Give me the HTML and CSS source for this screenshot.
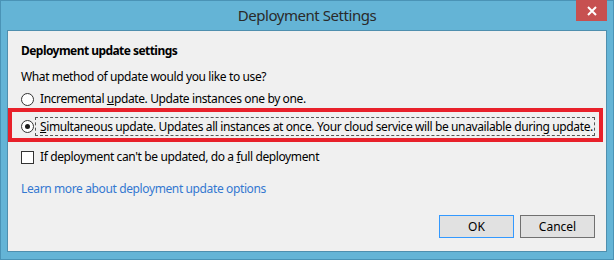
FILE: index.html
```html
<!DOCTYPE html>
<html lang="en">
<head>
    <meta charset="utf-8" />
    <title>Deployment Settings</title>
    <link rel="stylesheet" href="styles.css">
</head>
<body>
    <div class="window">
        <div class="titlebar">
            <span class="title">Deployment Settings</span>
            <button class="close-btn" aria-label="Close">
                <svg width="10" height="10" viewBox="0 0 10 10">
                    <path d="M1 1 L9 9 M9 1 L1 9" stroke="#fff" stroke-width="2" fill="none" />
                </svg>
            </button>
        </div>

        <div class="client">
            <h1 class="section-title">Deployment update settings</h1>
            <p class="question">What method of update would you like to use?</p>

            <label class="option">
                <span class="radio"></span>
                <span class="option-text">Incremental <u>u</u>pdate. Update instances one by one.</span>
            </label>

            <div class="highlight">
                <label class="option">
                    <span class="radio checked"></span>
                    <span class="option-text focused"><u>S</u>imultaneous update. Updates all instances at once. Your cloud service will be unavailable during update.</span>
                </label>
            </div>

            <label class="option check-row">
                <span class="checkbox"></span>
                <span class="option-text">If deployment can't be updated, do a <u>f</u>ull deployment</span>
            </label>

            <a class="help-link" href="#">Learn more about deployment update options</a>

            <div class="buttons">
                <button class="btn btn-default">OK</button>
                <button class="btn">Cancel</button>
            </div>
        </div>
    </div>
</body>
</html>
```

FILE: styles.css
```css
* {
    margin: 0;
    padding: 0;
    box-sizing: border-box;
}

body {
    font-family: 'Noto Sans', 'Open Sans', sans-serif;
    font-size: 12px;
    letter-spacing: -0.38px;
    color: #000;
    background: #64b4d6;
}

.window {
    width: 614px;
    height: 260px;
    background: #64b4d6;
    border: 1px solid #4a93b6;
    padding: 0 6px;
    display: flex;
    flex-direction: column;
}

.titlebar {
    position: relative;
    height: 29px;
    display: flex;
    align-items: center;
    justify-content: center;
}

.title {
    font-size: 15px;
    letter-spacing: -0.45px;
    color: #2a2a2a;
    line-height: 29px;
}

.close-btn {
    position: absolute;
    top: -1px;
    right: 0;
    width: 31px;
    height: 21px;
    border: none;
    background: #c75050;
    display: flex;
    align-items: center;
    justify-content: center;
}

.client {
    height: 222px;
    background: #f0f0f0;
    border: 1px solid #4f8fae;
    display: flex;
    flex-direction: column;
}

.section-title {
    font-size: 12px;
    font-weight: 700;
    letter-spacing: -0.55px;
    line-height: 16px;
    margin: 12px 0 0 13px;
}

.question {
    line-height: 16px;
    margin: 10px 0 0 13px;
}

.option {
    display: flex;
    align-items: center;
    line-height: 16px;
    margin: 5px 0 0 13px;
}

.radio {
    width: 13px;
    height: 13px;
    border: 1px solid #333;
    border-radius: 50%;
    background: #fff;
    margin-right: 1px;
    display: flex;
    align-items: center;
    justify-content: center;
    flex-shrink: 0;
}

.radio.checked::after {
    content: '';
    width: 5px;
    height: 5px;
    border-radius: 50%;
    background: #1a1a1a;
}

.checkbox {
    width: 13px;
    height: 13px;
    border: 1px solid #333;
    background: #fff;
    margin-right: 1px;
    flex-shrink: 0;
}

.option-text {
    border: 1px solid transparent;
    padding: 0 1px 0 4px;
    white-space: nowrap;
}

.option-text.focused {
    border: 1px dashed #555;
    line-height: 17px;
}

.highlight {
    border: 4px solid #e8202a;
    margin: 0 3px 0 0;
    padding: 5px 0 2px 9px;
}

.highlight .option {
    margin: 0;
}

.check-row {
    margin-top: 6px;
}

.help-link {
    color: #3478d0;
    text-decoration: none;
    line-height: 16px;
    margin: 15px 0 0 13px;
    align-self: flex-start;
}

.buttons {
    display: flex;
    justify-content: flex-end;
    gap: 6px;
    margin: auto 11px 13px 0;
}

.btn {
    width: 75px;
    height: 23px;
    font-family: inherit;
    font-size: 12px;
    color: #000;
    background: #e1e1e1;
    border: 1px solid #707070;
}

.btn-default {
    border-color: #3399ff;
}
```
